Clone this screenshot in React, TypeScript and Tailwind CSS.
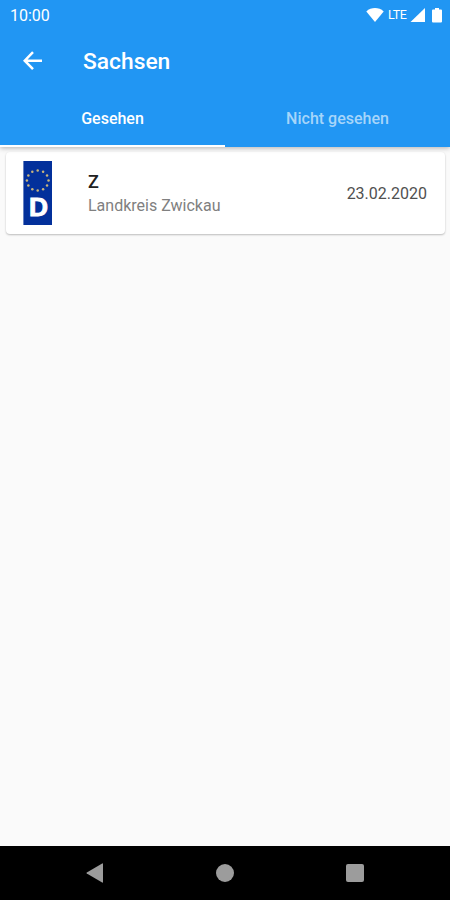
import React from "react";

const stars = Array.from({ length: 12 }, (_, i) => {
  const a = (i * Math.PI) / 6;
  return { x: 14.7 + 10.8 * Math.sin(a), y: 19.5 - 10 * Math.cos(a) };
});

function StatusBar() {
  return (
    <div className="flex h-[30px] items-center justify-between pl-[10px] pr-[8px] text-white">
      <span className="pt-[1px] text-[16px] leading-[30px]">10:00</span>
      <div className="flex items-center">
        <svg width="18" height="14" viewBox="0 0 18 14" fill="currentColor">
          <path d="M9 14 L0.3 3.4 C5.2-1 12.8-1 17.7 3.4 Z" />
        </svg>
        <span className="ml-[4px] w-[20px] text-[12.5px] leading-[30px] tracking-[-0.4px]">LTE</span>
        <svg className="ml-[2px]" width="15" height="15" viewBox="0 0 15 15" fill="currentColor">
          <path d="M15 0V14H0.5Z" />
        </svg>
        <svg className="ml-[7px]" width="10" height="15" viewBox="0 0 10 15" fill="currentColor">
          <path d="M3 0H7V1.6H9Q10 1.6 10 2.6V13.5Q10 14.5 9 14.5H1Q0 14.5 0 13.5V2.6Q0 1.6 1 1.6H3Z" />
        </svg>
      </div>
    </div>
  );
}

function Plate() {
  return (
    <svg className="block" width="29" height="64" viewBox="0 0 29 64">
      <rect x="0.4" width="28.6" height="64" fill="#03309b" />
      {stars.map((s, i) => (
        <circle key={i} cx={s.x} cy={s.y} r="1.25" fill="#c9b57c" />
      ))}
      <text x="6" y="55" fill="#ffffff" stroke="#ffffff" strokeWidth="0.9" fontSize="25" fontWeight="700" textLength="19" lengthAdjust="spacingAndGlyphs" fontFamily="Liberation Sans, sans-serif">
        D
      </text>
    </svg>
  );
}

export default function App() {
  return (
    <div className="flex h-[900px] w-[450px] flex-col overflow-hidden bg-[#fafafa] font-['Roboto',sans-serif]">
      <header className="z-10 h-[147px] shrink-0 bg-[#2196f3] text-white shadow-[0_1px_5px_rgba(0,0,0,0.3)]">
        <StatusBar />
        <div className="flex h-[61px] items-center pl-[23px]">
          <svg width="20" height="20" viewBox="0 0 20 20" fill="none" stroke="currentColor" strokeWidth="2.5">
            <path d="M19 9.7H2M10 1.2L1.7 9.7L10 18.2" />
          </svg>
          <h1 className="ml-[40px] pt-[2px] text-[22.8px] font-medium leading-[61px]">Sachsen</h1>
        </div>
        <div className="flex h-[56px] text-[16px] font-medium">
          <div className="flex w-[225px] items-center justify-center border-b-[2.5px] border-white pt-[2px]">Gesehen</div>
          <div className="flex w-[225px] items-center justify-center text-[#a6d5fa]">Nicht gesehen</div>
        </div>
      </header>
      <main className="flex-1 pl-[6px] pr-[5px] pt-[5px]">
        <div className="flex h-[82px] items-center rounded-[4px] bg-white pl-[17px] pr-[18px] shadow-[0_1px_2px_rgba(0,0,0,0.25)]">
          <Plate />
          <div className="ml-[36px] flex-1 pt-[2px]">
            <div className="text-[18px] font-medium leading-[24px] text-[#212121]">Z</div>
            <div className="text-[16px] leading-[24px] text-[#808080]">Landkreis Zwickau</div>
          </div>
          <div className="pt-[2px] text-[16px] text-[#505050]">23.02.2020</div>
        </div>
      </main>
      <nav className="flex h-[54px] shrink-0 items-center justify-between bg-black pl-[86px] pr-[86px] text-[#9c9c9c]">
        <svg width="18" height="20" viewBox="0 0 18 20" fill="currentColor">
          <path d="M16.2 0.4Q17 0 17 1V19Q17 20 16.2 19.6L0.8 10.6Q0 10 0.8 9.4Z" />
        </svg>
        <div className="size-[18px] rounded-full bg-[#9c9c9c]" />
        <div className="size-[18px] rounded-[2px] bg-[#9c9c9c]" />
      </nav>
    </div>
  );
}
